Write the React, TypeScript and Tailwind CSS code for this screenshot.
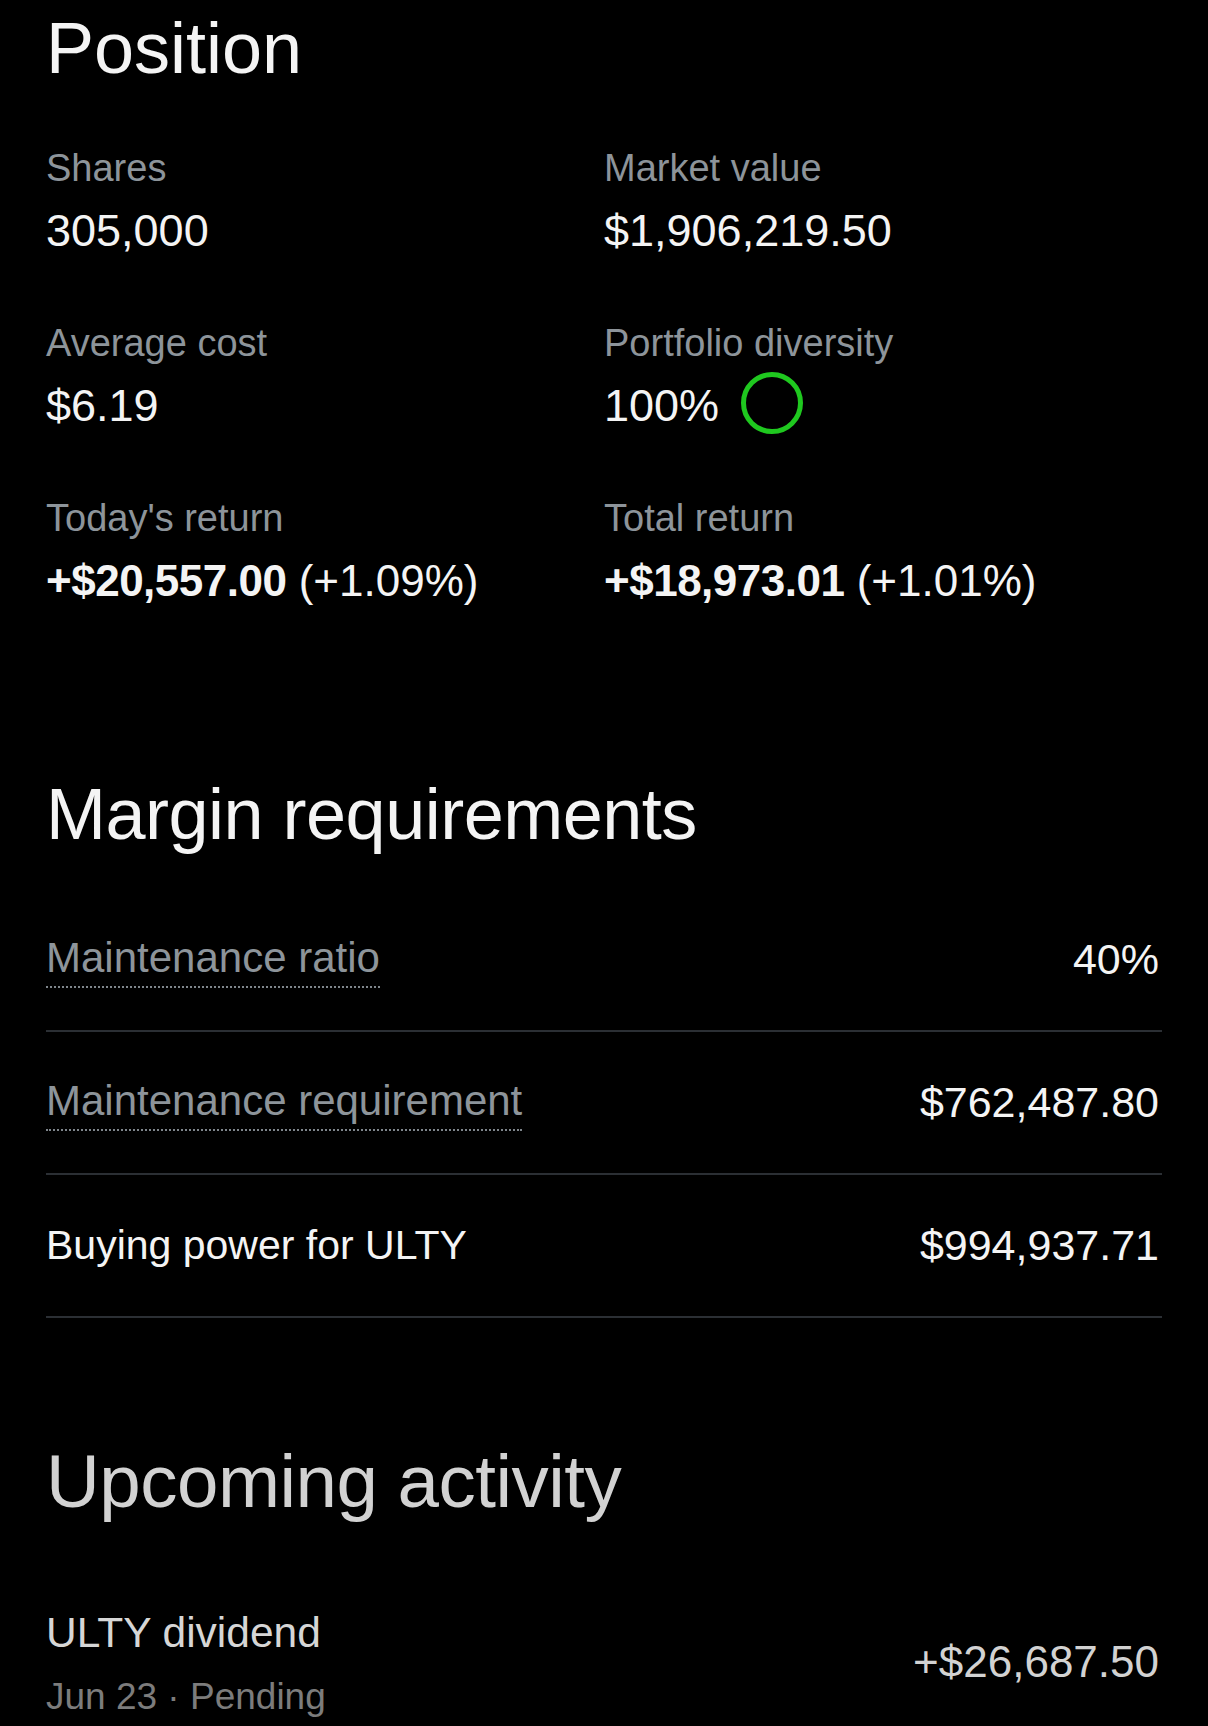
import React from 'react';

const stats = [
  { label: 'Shares', value: '305,000' },
  { label: 'Market value', value: '$1,906,219.50' },
  { label: 'Average cost', value: '$6.19' },
  { label: 'Portfolio diversity', value: '100%', ring: true },
  { label: "Today's return", bold: '+$20,557.00', rest: ' (+1.09%)' },
  { label: 'Total return', bold: '+$18,973.01', rest: ' (+1.01%)' },
];

const margin = [
  { label: 'Maintenance ratio', value: '40%', dotted: true },
  { label: 'Maintenance requirement', value: '$762,487.80', dotted: true },
  { label: 'Buying power for ULTY', value: '$994,937.71', dotted: false },
];

function Ring() {
  return (
    <svg width="64" height="64" viewBox="0 0 64 64" className="ml-[21px] -mt-[6px]">
      <circle cx="32" cy="32" r="28.5" fill="none" stroke="#1fc81f" strokeWidth="5" />
    </svg>
  );
}

export default function App() {
  return (
    <div
      className="h-[1726px] overflow-hidden bg-black px-[46px] text-[#f4f4f4]"
      style={{ fontFamily: '"Liberation Sans", Arial, sans-serif' }}
    >
      {/* position */}
      <h1 className="h-[96px] text-[72px] leading-[96px] font-normal">Position</h1>

      <div className="mt-[44px] grid grid-cols-2 gap-y-[49px]">
        {stats.map((s) => (
          <div key={s.label}>
            <div className="h-[56px] text-[38px] leading-[56px] text-[#8d949a]">{s.label}</div>
            <div className="flex h-[70px] items-center text-[45px] leading-[70px]">
              {s.bold ? (
                <span className="text-[44px]">
                  <span className="font-bold tracking-[-0.5px]">{s.bold}</span>
                  {s.rest}
                </span>
              ) : (
                <span>{s.value}</span>
              )}
              {s.ring && <Ring />}
            </div>
          </div>
        ))}
      </div>

      {/* margin requirements */}
      <h2 className="mt-[150px] h-[96px] text-[72px] leading-[96px] font-normal tracking-[-0.5px]">
        Margin requirements
      </h2>

      <div className="mt-[27px]">
        {margin.map((r) => (
          <div
            key={r.label}
            className="flex h-[143px] items-center justify-between border-b-2 border-[#2b2f34]"
          >
            {r.dotted ? (
              <span className="mt-[5px] inline-block border-b-2 border-dotted border-[#7f868c] pb-[7px] text-[42px] leading-none text-[#8d949a]">
                {r.label}
              </span>
            ) : (
              <span className="text-[41px] leading-none">{r.label}</span>
            )}
            <span className="pr-[3px] text-[43px] leading-none">{r.value}</span>
          </div>
        ))}
      </div>

      {/* upcoming activity */}
      <h2 className="mt-[116px] h-[96px] text-[74.5px] leading-[96px] font-normal tracking-[-0.5px] text-[#d2d2d2]">
        Upcoming activity
      </h2>

      <div className="mt-[75px] flex items-start justify-between">
        <div>
          <div className="h-[56px] text-[42.5px] leading-[56px] text-[#d6d6d6]">ULTY dividend</div>
          <div className="h-[72px] text-[37px] leading-[72px] text-[#7c7c7c]">Jun 23 · Pending</div>
        </div>
        <div className="mt-[29px] h-[56px] pr-[3px] text-[44px] leading-[56px] text-[#d2d2d2]">+$26,687.50</div>
      </div>
    </div>
  );
}
